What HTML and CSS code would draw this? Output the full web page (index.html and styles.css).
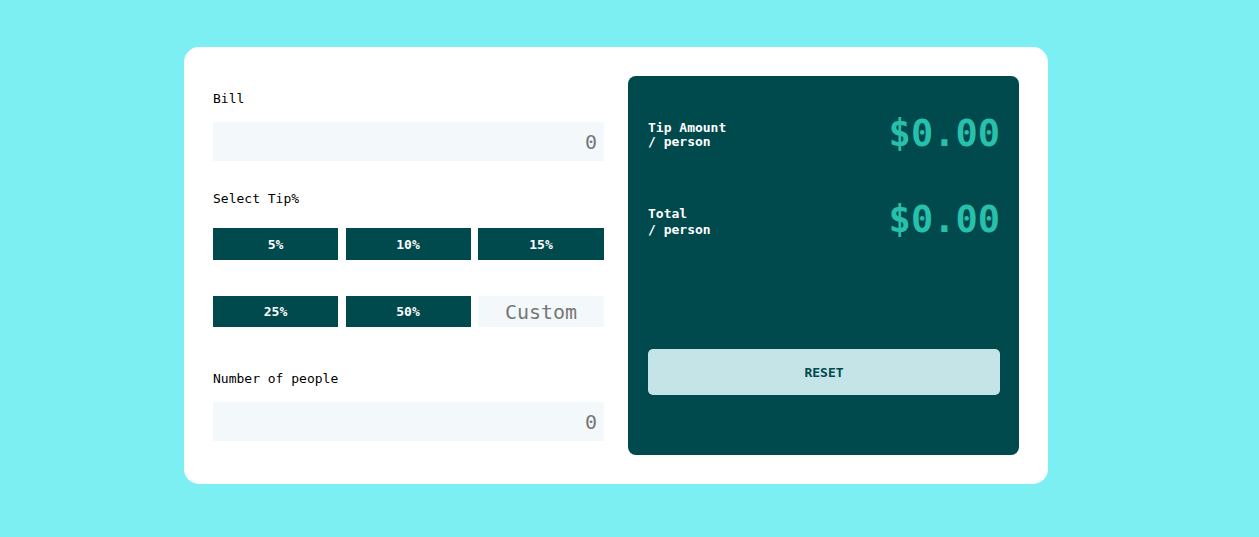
FILE: index.html
```html
<!DOCTYPE html>
<html lang="en">
<head>
<meta charset="utf-8">
<title>Tip Calculator</title>
<link rel="stylesheet" href="styles.css">
</head>
<body>
<main class="card">
  <section class="inputs">
    <label class="label label-bill" for="bill">Bill</label>
    <input class="field" id="bill" type="text" placeholder="0">
    <p class="label label-tip">Select Tip%</p>
    <div class="tips">
      <button class="tip">5%</button>
      <button class="tip">10%</button>
      <button class="tip">15%</button>
      <button class="tip">25%</button>
      <button class="tip">50%</button>
      <input class="custom" type="text" placeholder="Custom">
    </div>
    <label class="label label-people" for="people">Number of people</label>
    <input class="field" id="people" type="text" placeholder="0">
  </section>
  <section class="results">
    <div class="row row-tip">
      <div class="row-label tip-label">
        <span>Tip Amount</span>
        <span>/ person</span>
      </div>
      <div class="amount">$0.00</div>
    </div>
    <div class="row row-total">
      <div class="row-label total-label">
        <span>Total</span>
        <span>/ person</span>
      </div>
      <div class="amount">$0.00</div>
    </div>
    <button class="reset">RESET</button>
  </section>
</main>
</body>
</html>
```
FILE: styles.css
```css
* { box-sizing: border-box; }

html, body {
  margin: 0;
  padding: 0;
}

body {
  background: #7befF2;
  font-family: "DejaVu Sans Mono", "Liberation Mono", monospace;
  padding-top: 47px;
  height: 537px;
  overflow: hidden;
}

.card {
  width: 864px;
  height: 437px;
  margin-left: 184px;
  background: #ffffff;
  border-radius: 15px;
  padding: 29px;
  display: flex;
  gap: 24px;
}

.inputs {
  width: 391px;
  display: flex;
  flex-direction: column;
  padding-top: 14px;
}

.label {
  display: block;
  margin: 0;
  padding-top: 1px;
  font-size: 13px;
  line-height: 16px;
  color: #000;
}

.field {
  height: 39px;
  margin-top: 15px;
  border: none;
  outline: none;
  background: #f3f9fa;
  font-family: inherit;
  font-size: 20px;
  text-align: right;
  padding: 0 7px 0 0;
  color: #00474b;
}

.field::placeholder, .custom::placeholder {
  color: #777777;
  opacity: 1;
}

.label-tip { margin-top: 29px; }
.label-people { margin-top: 43px; }

.tips {
  margin-top: 21px;
  display: grid;
  grid-template-columns: 125px 125px 126px;
  grid-template-rows: 32px 31px;
  column-gap: 7.5px;
  row-gap: 36px;
}

.tip {
  border: none;
  background: #00494d;
  color: #ffffff;
  font-family: inherit;
  font-weight: bold;
  font-size: 13px;
  padding: 0;
}

.custom {
  border: none;
  outline: none;
  background: #f3f9fa;
  font-family: inherit;
  font-size: 20px;
  text-align: center;
  padding: 0;
  min-width: 0;
  width: 100%;
}

.results {
  width: 391px;
  background: #00494d;
  border-radius: 8px;
  padding: 36px 19px 0 20px;
  display: flex;
  flex-direction: column;
}

.row {
  height: 43px;
  display: flex;
  align-items: center;
  justify-content: space-between;
}

.row-total { margin-top: 43px; }

.row-label {
  display: flex;
  flex-direction: column;
  color: #ffffff;
  font-weight: bold;
  font-size: 13px;
}

.tip-label { line-height: 14px; margin-top: 3px; }
.total-label { line-height: 16px; margin-top: 5px; }

.amount {
  color: #26c0ab;
  font-size: 37px;
  font-weight: bold;
  line-height: 43px;
}

.reset {
  margin-top: 108px;
  height: 46px;
  width: 352px;
  border: none;
  border-radius: 5px;
  background: #c5e4e7;
  color: #00494d;
  font-family: inherit;
  font-weight: bold;
  font-size: 13px;
}
```
